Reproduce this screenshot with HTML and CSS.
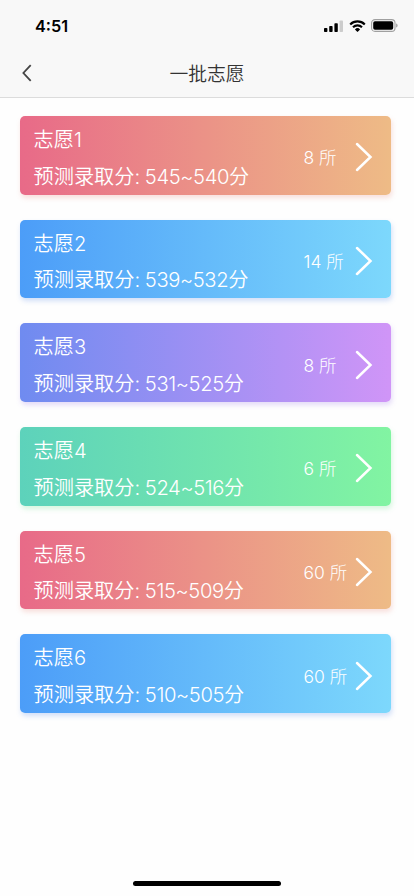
FILE: index.html
```html
<!DOCTYPE html>
<html lang="zh-CN">
<head>
    <meta charset="UTF-8">
    <meta name="viewport" content="width=device-width, initial-scale=1.0">
    <title>一批志愿</title>
    <link rel="stylesheet" href="styles.css">
</head>
<body>

    <!-- 顶部 -->
    <header class="header">
        <div class="status-bar">
            <span class="time">4:51</span>
            <div class="status-icons">
                <svg width="19" height="12" viewBox="0 0 19 12">
                    <rect x="0" y="8" width="3.4" height="4" rx="0.8"/>
                    <rect x="5.2" y="6" width="3.4" height="6" rx="0.8"/>
                    <rect x="10.4" y="3.2" width="3.4" height="8.8" rx="0.8"/>
                    <rect x="15.6" y="0.5" width="3.4" height="11.5" rx="0.8" fill="#ccc"/>
                </svg>
                <svg class="wifi" width="17" height="12" viewBox="0 0 17 12">
                    <path d="M1.2 4.4a10.4 10.4 0 0 1 14.6 0M4 7.2a6.4 6.4 0 0 1 9 0" fill="none" stroke="#000" stroke-width="2.1"/>
                    <path d="M8.5 12L5.9 9.4a3.7 3.7 0 0 1 5.2 0z"/>
                </svg>
                <svg class="battery" width="27" height="13" viewBox="0 0 27 13">
                    <rect x="0.6" y="0.6" width="23.4" height="11.8" rx="3.4" fill="none" stroke="#a0a0a0" stroke-width="1.1"/>
                    <rect x="2.2" y="2.2" width="20" height="8.6" rx="1.8"/>
                    <path d="M25.1 4.5c2 .8 2 3.2 0 4z" fill="#a0a0a0"/>
                </svg>
            </div>
        </div>
        <div class="nav-bar">
            <svg class="back" width="10" height="18" viewBox="0 0 10 18">
                <path d="M8.7 1.2L1.4 9l7.3 7.8"/>
            </svg>
            <h1>一批志愿</h1>
        </div>
    </header>

    <!-- 志愿列表 -->
    <main class="list">
        <div class="card red">
            <div class="info">
                <p>志愿1</p>
                <p>预测录取分: <span class="score">545~540</span>分</p>
            </div>
            <span class="count">8 所</span>
            <svg class="arrow" width="18" height="30" viewBox="0 0 18 30"><path d="M2 2l13.5 13L2 28"/></svg>
        </div>
        <div class="card blue">
            <div class="info">
                <p>志愿2</p>
                <p>预测录取分: <span class="score">539~532</span>分</p>
            </div>
            <span class="count">14 所</span>
            <svg class="arrow" width="18" height="30" viewBox="0 0 18 30"><path d="M2 2l13.5 13L2 28"/></svg>
        </div>
        <div class="card purple">
            <div class="info">
                <p>志愿3</p>
                <p>预测录取分: <span class="score">531~525</span>分</p>
            </div>
            <span class="count">8 所</span>
            <svg class="arrow" width="18" height="30" viewBox="0 0 18 30"><path d="M2 2l13.5 13L2 28"/></svg>
        </div>
        <div class="card green">
            <div class="info">
                <p>志愿4</p>
                <p>预测录取分: <span class="score">524~516</span>分</p>
            </div>
            <span class="count">6 所</span>
            <svg class="arrow" width="18" height="30" viewBox="0 0 18 30"><path d="M2 2l13.5 13L2 28"/></svg>
        </div>
        <div class="card red">
            <div class="info">
                <p>志愿5</p>
                <p>预测录取分: <span class="score">515~509</span>分</p>
            </div>
            <span class="count">60 所</span>
            <svg class="arrow" width="18" height="30" viewBox="0 0 18 30"><path d="M2 2l13.5 13L2 28"/></svg>
        </div>
        <div class="card blue">
            <div class="info">
                <p>志愿6</p>
                <p>预测录取分: <span class="score">510~505</span>分</p>
            </div>
            <span class="count">60 所</span>
            <svg class="arrow" width="18" height="30" viewBox="0 0 18 30"><path d="M2 2l13.5 13L2 28"/></svg>
        </div>
    </main>

    <div class="home-indicator"></div>

</body>
</html>
```
FILE: styles.css
```css
* {
    box-sizing: border-box;
}

body {
    font-family: Inter, "Noto Sans CJK SC", sans-serif;
    margin: 0;
    height: 896px;
    display: flex;
    flex-direction: column;
    background-color: #fefefe;
    overflow: hidden;
}

p, h1 {
    margin: 0;
}

svg {
    display: block;
}

.header {
    height: 98px;
    background-color: #f8f8f8;
    border-bottom: 1px solid #dcdcdc;
}

.status-bar {
    height: 50px;
    padding: 1px 15px 0 35px;
    display: flex;
    align-items: center;
    justify-content: space-between;
}

.time {
    font-size: 16.3px;
    font-weight: 600;
    line-height: 20px;
}

.status-icons {
    display: flex;
    align-items: center;
}

.wifi {
    margin-left: 6px;
}

.battery {
    margin-left: 5px;
    margin-right: 1px;
}

.nav-bar {
    height: 46px;
    padding: 0 22px;
    display: grid;
    grid-template-columns: 10px 1fr 10px;
    align-items: center;
}

.back path {
    fill: none;
    stroke: #444;
    stroke-width: 1.8;
}

.nav-bar h1 {
    color: #333;
    font-size: 18.8px;
    font-weight: 350;
    text-align: center;
    padding-bottom: 1px;
}

.list {
    flex: 1;
    padding: 18px 23px 0 20px;
    display: flex;
    flex-direction: column;
    gap: 25.2px;
}

.card {
    height: 78.5px;
    padding: 4px 18px 0 13.5px;
    display: flex;
    align-items: center;
    color: #fff;
    border-radius: 5px;
    font-weight: 350;
}

/* 各批次渐变色 */
.red {
    background: linear-gradient(to right, #e86a88, #eebb86);
    box-shadow: 1px 3px 5px rgba(232, 130, 120, 0.25);
}

.blue {
    background: linear-gradient(to right, #4c9df8, #7dd8fc);
    box-shadow: 1px 3px 5px rgba(80, 130, 230, 0.25);
}

.purple {
    background: linear-gradient(to right, #6f8bf0, #d095f7);
    box-shadow: 1px 3px 5px rgba(150, 110, 230, 0.25);
}

.green {
    background: linear-gradient(to right, #5dd2bb, #82f4a2);
    box-shadow: 1px 3px 5px rgba(100, 225, 130, 0.25);
}

.info {
    width: 270px;
    padding-top: 2.5px;
    font-size: 20.2px;
    line-height: 36.5px;
}

.score {
    margin-left: -1px;
    letter-spacing: -0.4px;
}

.count {
    flex: 1;
    font-size: 17.5px;
    font-weight: 300;
    line-height: 24px;
    padding-top: 2px;
    white-space: nowrap;
}

.arrow path {
    fill: none;
    stroke: #fff;
    stroke-width: 2.5;
    stroke-linecap: round;
}

.home-indicator {
    width: 148px;
    height: 5px;
    margin: 0 auto 10px;
    border-radius: 3px;
    background-color: #000;
}
```
